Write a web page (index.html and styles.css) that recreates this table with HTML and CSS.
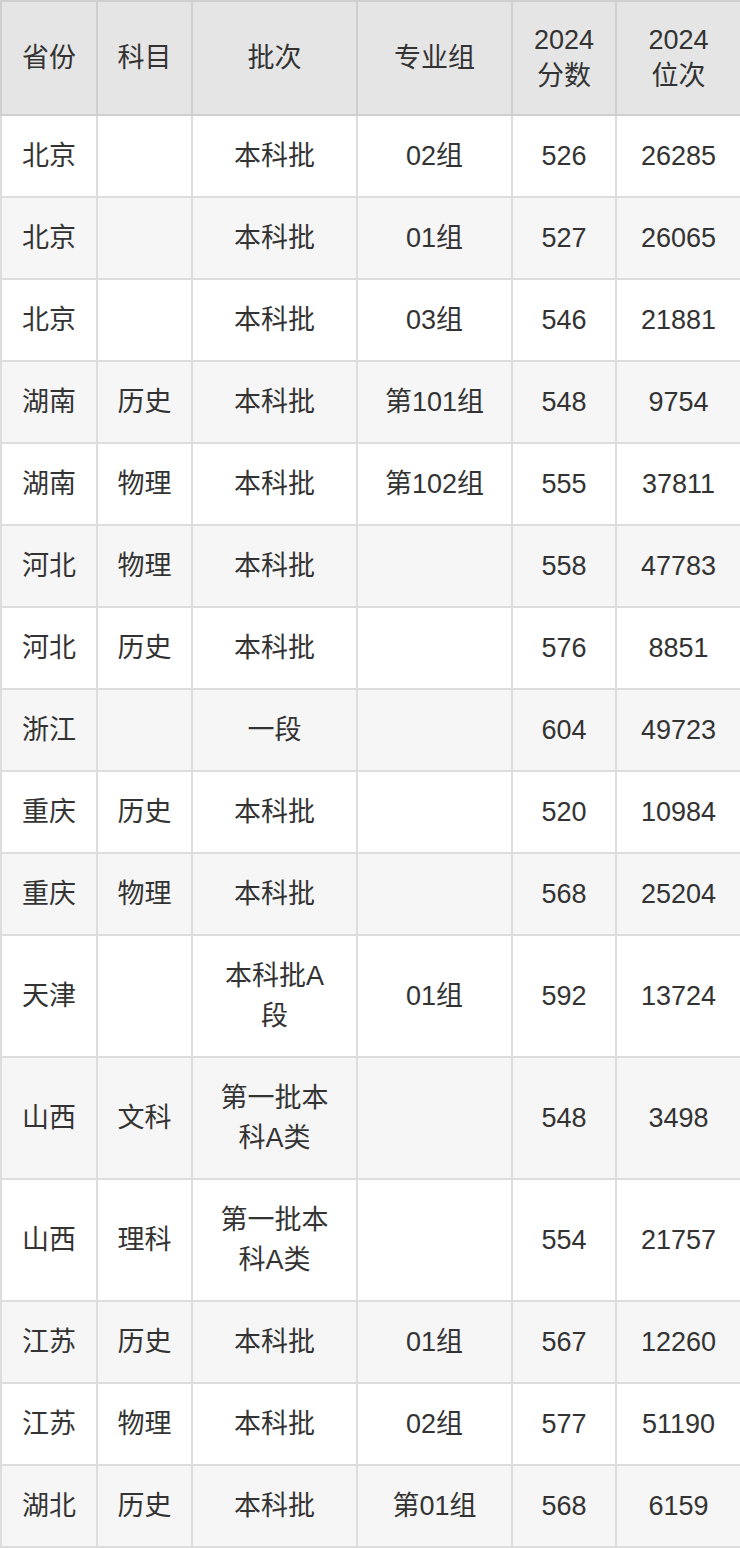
FILE: index.html
```html
<!DOCTYPE html>
<html lang="zh-CN">
<head>
<meta charset="utf-8">
<title>录取分数</title>
<link rel="stylesheet" href="styles.css">
</head>
<body>
<table class="score-table">
  <colgroup>
    <col class="c1"><col class="c2"><col class="c3"><col class="c4"><col class="c5"><col class="c6">
  </colgroup>
  <thead>
    <tr><th>省份</th><th>科目</th><th>批次</th><th>专业组</th><th>2024<br>分数</th><th>2024<br>位次</th></tr>
  </thead>
  <tbody>
    <tr><td>北京</td><td></td><td>本科批</td><td>02组</td><td>526</td><td>26285</td></tr>
    <tr><td>北京</td><td></td><td>本科批</td><td>01组</td><td>527</td><td>26065</td></tr>
    <tr><td>北京</td><td></td><td>本科批</td><td>03组</td><td>546</td><td>21881</td></tr>
    <tr><td>湖南</td><td>历史</td><td>本科批</td><td>第101组</td><td>548</td><td>9754</td></tr>
    <tr><td>湖南</td><td>物理</td><td>本科批</td><td>第102组</td><td>555</td><td>37811</td></tr>
    <tr><td>河北</td><td>物理</td><td>本科批</td><td></td><td>558</td><td>47783</td></tr>
    <tr><td>河北</td><td>历史</td><td>本科批</td><td></td><td>576</td><td>8851</td></tr>
    <tr><td>浙江</td><td></td><td>一段</td><td></td><td>604</td><td>49723</td></tr>
    <tr><td>重庆</td><td>历史</td><td>本科批</td><td></td><td>520</td><td>10984</td></tr>
    <tr><td>重庆</td><td>物理</td><td>本科批</td><td></td><td>568</td><td>25204</td></tr>
    <tr><td>天津</td><td></td><td>本科批A<br>段</td><td>01组</td><td>592</td><td>13724</td></tr>
    <tr><td>山西</td><td>文科</td><td>第一批本<br>科A类</td><td></td><td>548</td><td>3498</td></tr>
    <tr><td>山西</td><td>理科</td><td>第一批本<br>科A类</td><td></td><td>554</td><td>21757</td></tr>
    <tr><td>江苏</td><td>历史</td><td>本科批</td><td>01组</td><td>567</td><td>12260</td></tr>
    <tr><td>江苏</td><td>物理</td><td>本科批</td><td>02组</td><td>577</td><td>51190</td></tr>
    <tr><td>湖北</td><td>历史</td><td>本科批</td><td>第01组</td><td>568</td><td>6159</td></tr>
  </tbody>
</table>
</body>
</html>
```
FILE: styles.css
```css
html, body {
  margin: 0;
  padding: 0;
  background: #ffffff;
}

body {
  font-family: "Liberation Sans", "Noto Sans CJK SC", sans-serif;
  color: #333333;
}

.score-table {
  width: 740px;
  table-layout: fixed;
  border-collapse: collapse;
  border: 2px solid #dddddd;
  font-size: 27px;
}

.c1 { width: 96px; }
.c2 { width: 95px; }
.c3 { width: 165px; }
.c4 { width: 155px; }
.c5 { width: 104px; }
.c6 { width: 125px; }

.score-table th {
  background: #e5e5e5;
  font-weight: normal;
  line-height: 36px;
  padding: 20px 4px;
  border: 2px solid #cfcfcf;
  text-align: center;
  vertical-align: middle;
}

.score-table td {
  line-height: 40px;
  padding: 20px 4px;
  border: 2px solid #dddddd;
  text-align: center;
  vertical-align: middle;
}

.score-table tbody tr:nth-child(even) td {
  background: #f6f6f6;
}
```
